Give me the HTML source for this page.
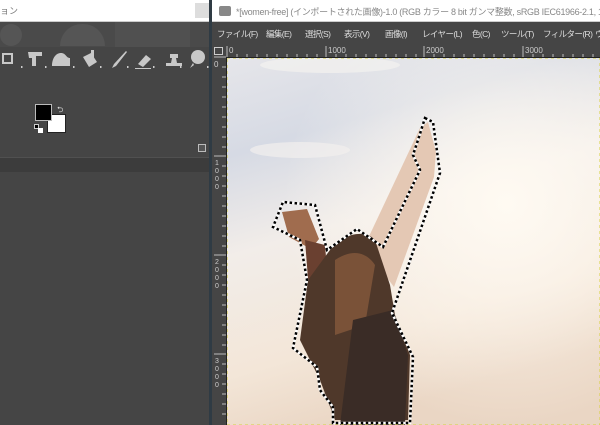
<!DOCTYPE html><html><head><meta charset="utf-8"><style>
*{margin:0;padding:0;box-sizing:border-box}
body{width:600px;height:425px;overflow:hidden;background:#454545;position:relative;font-family:"Liberation Sans","Noto Sans CJK JP",sans-serif}
.a{position:absolute}
.m{position:absolute;top:28px;font-size:8.5px;color:#ddd;white-space:nowrap;letter-spacing:-0.6px}
</style></head><body>
<div class="a" style="left:0;top:0;width:210px;height:22px;background:#fff;border-bottom:1px solid #ccc"></div>
<div class="a" style="left:0;top:4px;font-size:9px;color:#777">ョン</div>
<div class="a" style="left:195px;top:3px;width:14px;height:15px;background:#ddd"></div>
<div class="a" style="left:0;top:22px;width:210px;height:25px;background:#4a4a4a"></div>
<div class="a" style="left:0;top:24px;width:22px;height:22px;border-radius:11px;background:#555"></div>
<div class="a" style="left:60px;top:24px;width:45px;height:22px;border-radius:22px 22px 0 0;background:#555"></div>
<div class="a" style="left:115px;top:22px;width:75px;height:25px;background:#505050"></div>
<svg class="a" style="left:0;top:47px" width="210" height="30">
<g fill="#c8c8c8" stroke="#c8c8c8">
<rect x="3" y="7" width="9" height="9" fill="none" stroke-width="2"/>
<path d="M28 5h14v4h-6v10h-4v-8h-3z" stroke="none"/>
<path d="M52 19c0-8 4-13 9-13s5 5 9 5v8z" stroke="none"/>
<path d="M83 10l8-4 6 9-8 5z" stroke="none"/><rect x="91" y="3" width="3" height="8" stroke="none"/>
<path d="M112 21l2-4 12-13 1 1-11 14z" stroke="none"/>
<path d="M138 17l8-9 5 4-8 8z" stroke="none"/><rect x="135" y="21" width="16" height="1" stroke="none"/>
<path d="M166 19h16v-3h-5l-1-5h2v-4h-8v4h2l-1 5h-5z" stroke="none"/>
<circle cx="198" cy="10" r="7" stroke="none"/><path d="M193 16l-3 5 4-3z" stroke="none"/>
</g>
<g fill="#ccc"><rect x="21" y="19" width="1.5" height="2"/><rect x="45" y="19" width="1.5" height="2"/><rect x="73" y="19" width="1.5" height="2"/><rect x="100" y="19" width="1.5" height="2"/><rect x="127" y="19" width="1.5" height="2"/><rect x="153" y="19" width="1.5" height="2"/><rect x="180" y="19" width="1.5" height="2"/><rect x="207" y="19" width="1.5" height="2"/></g>
</svg>
<div class="a" style="left:47px;top:114px;width:19px;height:19px;background:#fff;border:1px solid #222"></div>
<div class="a" style="left:35px;top:104px;width:17px;height:17px;background:#000;border:1px solid #bbb"></div>
<div class="a" style="left:57px;top:104px;font-size:8px;color:#ddd">⮌</div>
<div class="a" style="left:34px;top:124px;width:5px;height:5px;background:#000;border:1px solid #ccc"></div>
<div class="a" style="left:38px;top:128px;width:5px;height:5px;background:#fff"></div>
<div class="a" style="left:198px;top:144px;width:8px;height:8px;border:1px solid #bbb;background:#555"></div>
<div class="a" style="left:0;top:157px;width:210px;height:1px;background:#505050"></div>
<div class="a" style="left:0;top:158px;width:210px;height:14px;background:#3c3c3c"></div>
<div class="a" style="left:209px;top:0;width:3px;height:425px;background:#2f3b44"></div>
<div class="a" style="left:212px;top:0;width:388px;height:22px;background:#fff;border-bottom:1px solid #ccc;overflow:hidden">
<div class="a" style="left:7px;top:6px;width:12px;height:10px;background:#888;border-radius:2px"></div>
<div class="a" style="left:24px;top:5px;font-size:9px;color:#888;white-space:nowrap;letter-spacing:-0.3px">*[women-free] (インポートされた画像)-1.0 (RGB カラー 8 bit ガンマ整数, sRGB IEC61966-2.1, 1枚</div>
</div>
<div class="a" style="left:212px;top:22px;width:388px;height:23px;background:#454545"></div>
<div class="m" style="left:217px">ファイル(F)</div>
<div class="m" style="left:266px">編集(E)</div>
<div class="m" style="left:305px">選択(S)</div>
<div class="m" style="left:344px">表示(V)</div>
<div class="m" style="left:385px">画像(I)</div>
<div class="m" style="left:422px">レイヤー(L)</div>
<div class="m" style="left:472px">色(C)</div>
<div class="m" style="left:501px">ツール(T)</div>
<div class="m" style="left:543px">フィルター(R)</div>
<div class="m" style="left:595px;width:5px;overflow:hidden">ウ</div>
<div class="a" style="left:212px;top:45px;width:388px;height:12px;background:#454545"></div>
<div class="a" style="left:212px;top:57px;width:14px;height:368px;background:#454545"></div>
<div class="a" style="left:214px;top:47px;width:9px;height:8px;border:1px solid #ccc"></div>
<svg class="a" style="left:212px;top:45px" width="388" height="380">
<g stroke="#bbb" stroke-width="1">
<path d="M15 1v11M114 1v11M212 1v11M311 1v11"/>
<path d="M25 9v3M35 9v3M45 9v3M55 9v3M65 9v3M75 9v3M85 9v3M95 9v3M105 9v3M124 9v3M134 9v3M144 9v3M154 9v3M164 9v3M174 9v3M184 9v3M194 9v3M204 9v3M222 9v3M232 9v3M242 9v3M252 9v3M262 9v3M272 9v3M282 9v3M292 9v3M302 9v3M321 9v3M331 9v3M341 9v3M351 9v3M361 9v3M371 9v3M381 9v3"/>
<path d="M2 12h12M2 111h12M2 210h12M2 309h12"/>
<path d="M10 22h4M10 32h4M10 42h4M10 52h4M10 62h4M10 72h4M10 82h4M10 92h4M10 102h4M10 121h4M10 131h4M10 141h4M10 151h4M10 161h4M10 171h4M10 181h4M10 191h4M10 201h4M10 220h4M10 230h4M10 240h4M10 250h4M10 260h4M10 270h4M10 280h4M10 290h4M10 300h4M10 319h4M10 329h4M10 339h4M10 349h4M10 359h4M10 369h4"/>
</g>
<g fill="#ccc" font-size="8" font-family="Liberation Sans"><text x="17" y="8">0</text><text x="116" y="8">1000</text><text x="214" y="8">2000</text><text x="313" y="8">3000</text>
<text x="2" y="22">0</text></g>
<g fill="#ccc" font-size="7" font-family="Liberation Sans"><text x="3" y="120">1</text><text x="3" y="128">0</text><text x="3" y="136">0</text><text x="3" y="144">0</text><text x="3" y="219">2</text><text x="3" y="227">0</text><text x="3" y="235">0</text><text x="3" y="243">0</text><text x="3" y="318">3</text><text x="3" y="326">0</text><text x="3" y="334">0</text><text x="3" y="342">0</text></g>
</svg>
<svg class="a" style="left:226px;top:57px" width="374" height="368" viewBox="226 57 374 368">
<defs>
<linearGradient id="sky" x1="0" y1="0" x2="0.3" y2="1">
<stop offset="0" stop-color="#e6e6ea"/><stop offset="0.25" stop-color="#d6dae4"/><stop offset="0.5" stop-color="#f2ede9"/><stop offset="0.8" stop-color="#f3e6d8"/><stop offset="1" stop-color="#ead6c4"/></linearGradient>
<radialGradient id="sun" cx="0.75" cy="0.4" r="0.6"><stop offset="0" stop-color="#fffaf2"/><stop offset="1" stop-color="#fffaf2" stop-opacity="0"/></radialGradient>
</defs>
<rect x="226" y="57" width="374" height="368" fill="url(#sky)"/>
<rect x="226" y="57" width="374" height="368" fill="url(#sun)"/>
<ellipse cx="300" cy="150" rx="50" ry="8" fill="#f2f0ee" opacity=".7"/>
<ellipse cx="330" cy="65" rx="70" ry="8" fill="#f4f2f0" opacity=".7"/>
<path d="M420 128l8-6 8 30-2 25-40 110-30-40z" fill="#e4c8b4"/>
<path d="M282 212l25-3 12 30-8 10-22-12z" fill="#a06c4e"/>
<path d="M305 240l20 5 5 60-20 0z" fill="#6a4030"/>
<path d="M330 250c10-15 35-22 45-10l15 45 5 30 15 40-2 65h-73l-15-40-20-40 8-60z" fill="#4f382a"/>
<path d="M335 260c15-10 30-10 40 5l-10 60-30 10z" fill="#7a5238"/>
<path d="M353 320l40-10 15 45-3 70h-65z" fill="#3a2c26"/>
<path d="M425 118L433 122L440 173L392 313L413 357L410 423L333 423L333 407L320 390L317 367L293 348L307 280L300 240L273 227L283 202L315 205L327 250L357 229L383 247L420 170L413 155L418 140Z" fill="none" stroke="#fff" stroke-width="2.5"/>
<path d="M425 118L433 122L440 173L392 313L413 357L410 423L333 423L333 407L320 390L317 367L293 348L307 280L300 240L273 227L283 202L315 205L327 250L357 229L383 247L420 170L413 155L418 140Z" fill="none" stroke="#000" stroke-width="2.5" stroke-dasharray="2.5 2.5"/>
<rect x="227" y="58" width="373" height="367" fill="none" stroke="#d8d040" stroke-width="1" stroke-dasharray="3 3"/>
</svg>
<div class="a" style="left:226px;top:57px;width:1px;height:368px;background:#222"></div>
<div class="a" style="left:226px;top:57px;width:374px;height:1px;background:#222"></div>
</body></html>
